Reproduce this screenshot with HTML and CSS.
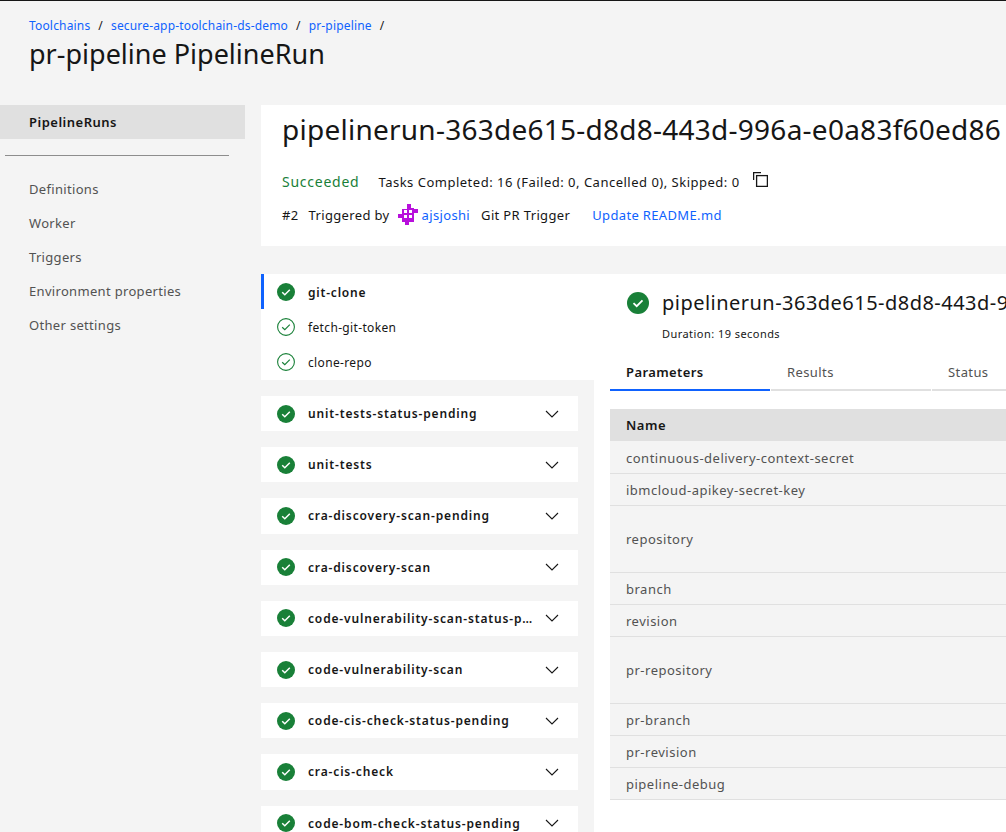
FILE: index.html
```html
<!doctype html>
<html>

<head>
	<meta charset="UTF-8">
	<title>pr-pipeline PipelineRun</title>
	<link rel="stylesheet" href="styles.css">
</head>

<body>
	<header class="page_head">
		<nav class="crumbs">
			<a href="#">Toolchains</a><span>/</span>
			<a href="#">secure-app-toolchain-ds-demo</a><span>/</span>
			<a href="#">pr-pipeline</a><span>/</span>
		</nav>
		<h1>pr-pipeline PipelineRun</h1>
	</header>
	<div class="page_body">
		<aside class="side">
			<div class="side_active">PipelineRuns</div>
			<hr>
			<ul>
				<li>Definitions</li>
				<li>Worker</li>
				<li>Triggers</li>
				<li>Environment properties</li>
				<li>Other settings</li>
			</ul>
		</aside>
		<main class="main">
			<section class="run_head">
				<h2>pipelinerun-363de615-d8d8-443d-996a-e0a83f60ed86</h2>
				<div class="run_status">
					<span class="ok_text">Succeeded</span>
					<span>Tasks Completed: 16 (Failed: 0, Cancelled 0), Skipped: 0</span>
					<svg class="copy" width="15" height="15" viewBox="0 0 15 15" fill="none" stroke="#161616" stroke-width="1.3">
						<rect x="3.6" y="3.6" width="10.8" height="10.8"/>
						<path d="M.6 8V.6H8"/>
					</svg>
				</div>
				<div class="run_trigger">
					<span class="num">#2</span>
					<span>Triggered by</span>
					<svg class="avatar" width="21" height="21" viewBox="0 0 21 21" fill="#b80fdc" fill-rule="evenodd">
						<path d="M9 0h4v4h3v1h4v4h-4v9h-5v3H7v-3H4v-4H0v-4h4V5h5zM6 6v3h3V6zm5 0v3h3V6zM6 11v3h3v-3zm5 0v3h3v-3z"/>
					</svg>
					<a class="user" href="#">ajsjoshi</a>
					<span class="trigger">Git PR Trigger</span>
					<a class="commit" href="#">Update README.md</a>
				</div>
			</section>
			<section class="run_body">
				<div class="tasks">
					<div class="task_open">
						<div class="step step_main">
							<svg class="icon" width="18" height="18" viewBox="0 0 18 18"><circle cx="9" cy="9" r="9" fill="#198038"/><path d="M5.2 9.2l2.6 2.5 5-5" fill="none" stroke="#fff" stroke-width="1.5"/></svg>
							git-clone
						</div>
						<div class="step">
							<svg class="icon" width="18" height="18" viewBox="0 0 18 18"><circle cx="9" cy="9" r="8.4" fill="none" stroke="#198038" stroke-width="1.1"/><path d="M5.2 9.2l2.6 2.5 5-5" fill="none" stroke="#198038" stroke-width="1.2"/></svg>
							fetch-git-token
						</div>
						<div class="step">
							<svg class="icon" width="18" height="18" viewBox="0 0 18 18"><circle cx="9" cy="9" r="8.4" fill="none" stroke="#198038" stroke-width="1.1"/><path d="M5.2 9.2l2.6 2.5 5-5" fill="none" stroke="#198038" stroke-width="1.2"/></svg>
							clone-repo
						</div>
					</div>
					<div class="task">
						<svg class="icon" width="18" height="18" viewBox="0 0 18 18"><circle cx="9" cy="9" r="9" fill="#198038"/><path d="M5.2 9.2l2.6 2.5 5-5" fill="none" stroke="#fff" stroke-width="1.5"/></svg>
						<span class="task_name">unit-tests-status-pending</span>
						<svg class="chev" width="14" height="8" viewBox="0 0 14 8"><path d="M1 1l6 6 6-6" fill="none" stroke="#161616" stroke-width="1.1"/></svg>
					</div>
					<div class="task">
						<svg class="icon" width="18" height="18" viewBox="0 0 18 18"><circle cx="9" cy="9" r="9" fill="#198038"/><path d="M5.2 9.2l2.6 2.5 5-5" fill="none" stroke="#fff" stroke-width="1.5"/></svg>
						<span class="task_name">unit-tests</span>
						<svg class="chev" width="14" height="8" viewBox="0 0 14 8"><path d="M1 1l6 6 6-6" fill="none" stroke="#161616" stroke-width="1.1"/></svg>
					</div>
					<div class="task">
						<svg class="icon" width="18" height="18" viewBox="0 0 18 18"><circle cx="9" cy="9" r="9" fill="#198038"/><path d="M5.2 9.2l2.6 2.5 5-5" fill="none" stroke="#fff" stroke-width="1.5"/></svg>
						<span class="task_name">cra-discovery-scan-pending</span>
						<svg class="chev" width="14" height="8" viewBox="0 0 14 8"><path d="M1 1l6 6 6-6" fill="none" stroke="#161616" stroke-width="1.1"/></svg>
					</div>
					<div class="task">
						<svg class="icon" width="18" height="18" viewBox="0 0 18 18"><circle cx="9" cy="9" r="9" fill="#198038"/><path d="M5.2 9.2l2.6 2.5 5-5" fill="none" stroke="#fff" stroke-width="1.5"/></svg>
						<span class="task_name">cra-discovery-scan</span>
						<svg class="chev" width="14" height="8" viewBox="0 0 14 8"><path d="M1 1l6 6 6-6" fill="none" stroke="#161616" stroke-width="1.1"/></svg>
					</div>
					<div class="task">
						<svg class="icon" width="18" height="18" viewBox="0 0 18 18"><circle cx="9" cy="9" r="9" fill="#198038"/><path d="M5.2 9.2l2.6 2.5 5-5" fill="none" stroke="#fff" stroke-width="1.5"/></svg>
						<span class="task_name">code-vulnerability-scan-status-pending</span>
						<svg class="chev" width="14" height="8" viewBox="0 0 14 8"><path d="M1 1l6 6 6-6" fill="none" stroke="#161616" stroke-width="1.1"/></svg>
					</div>
					<div class="task">
						<svg class="icon" width="18" height="18" viewBox="0 0 18 18"><circle cx="9" cy="9" r="9" fill="#198038"/><path d="M5.2 9.2l2.6 2.5 5-5" fill="none" stroke="#fff" stroke-width="1.5"/></svg>
						<span class="task_name">code-vulnerability-scan</span>
						<svg class="chev" width="14" height="8" viewBox="0 0 14 8"><path d="M1 1l6 6 6-6" fill="none" stroke="#161616" stroke-width="1.1"/></svg>
					</div>
					<div class="task">
						<svg class="icon" width="18" height="18" viewBox="0 0 18 18"><circle cx="9" cy="9" r="9" fill="#198038"/><path d="M5.2 9.2l2.6 2.5 5-5" fill="none" stroke="#fff" stroke-width="1.5"/></svg>
						<span class="task_name">code-cis-check-status-pending</span>
						<svg class="chev" width="14" height="8" viewBox="0 0 14 8"><path d="M1 1l6 6 6-6" fill="none" stroke="#161616" stroke-width="1.1"/></svg>
					</div>
					<div class="task">
						<svg class="icon" width="18" height="18" viewBox="0 0 18 18"><circle cx="9" cy="9" r="9" fill="#198038"/><path d="M5.2 9.2l2.6 2.5 5-5" fill="none" stroke="#fff" stroke-width="1.5"/></svg>
						<span class="task_name">cra-cis-check</span>
						<svg class="chev" width="14" height="8" viewBox="0 0 14 8"><path d="M1 1l6 6 6-6" fill="none" stroke="#161616" stroke-width="1.1"/></svg>
					</div>
					<div class="task">
						<svg class="icon" width="18" height="18" viewBox="0 0 18 18"><circle cx="9" cy="9" r="9" fill="#198038"/><path d="M5.2 9.2l2.6 2.5 5-5" fill="none" stroke="#fff" stroke-width="1.5"/></svg>
						<span class="task_name">code-bom-check-status-pending</span>
						<svg class="chev" width="14" height="8" viewBox="0 0 14 8"><path d="M1 1l6 6 6-6" fill="none" stroke="#161616" stroke-width="1.1"/></svg>
					</div>
				</div>
				<div class="detail">
					<div class="detail_title">
						<svg width="22" height="22" viewBox="0 0 22 22"><circle cx="11" cy="11" r="11" fill="#198038"/><path d="M6.5 11.2l3.2 3 5.8-5.8" fill="none" stroke="#fff" stroke-width="1.8"/></svg>
						<h3>pipelinerun-363de615-d8d8-443d-996a-e0a83f60ed86</h3>
					</div>
					<div class="duration">Duration: 19 seconds</div>
					<div class="tabs">
						<div class="tab tab_on">Parameters</div>
						<div class="tab">Results</div>
						<div class="tab">Status</div>
					</div>
					<table class="params">
						<tr><th>Name</th></tr>
						<tr><td>continuous-delivery-context-secret</td></tr>
						<tr><td>ibmcloud-apikey-secret-key</td></tr>
						<tr class="tall"><td>repository</td></tr>
						<tr><td>branch</td></tr>
						<tr><td>revision</td></tr>
						<tr class="tall"><td>pr-repository</td></tr>
						<tr><td>pr-branch</td></tr>
						<tr><td>pr-revision</td></tr>
						<tr><td>pipeline-debug</td></tr>
					</table>
				</div>
			</section>
		</main>
	</div>
</body>

</html>
```

FILE: styles.css
```css
html,body {
	margin: 0;
	height: 832px;
	overflow: hidden;
}

body {
	background: #f4f4f4;
	border-top: 1px solid #161616;
	box-sizing: border-box;
	color: #161616;
	font-family: "Noto Sans", "Open Sans", sans-serif;
}

a {
	color: #0f62fe;
	text-decoration: none;
}

.page_head {
	height: 104px;
	padding: 17px 0 0 29px;
	box-sizing: border-box;
}

.crumbs {
	display: flex;
	gap: 8px;
	font-size: 12px;
	line-height: 16px;
	letter-spacing: .17px;
}

.crumbs span {
	color: #161616;
}

h1 {
	margin: 3px 0 0;
	font-size: 27px;
	line-height: 34px;
	font-weight: 400;
}

.page_body {
	display: flex;
}

.side {
	flex: none;
	width: 245px;
	margin-right: 16px;
}

.side_active {
	height: 34px;
	padding-left: 29px;
	background: #e0e0e0;
	font-size: 13px;
	font-weight: 600;
	line-height: 34px;
	letter-spacing: .5px;
}

.side hr {
	width: 224px;
	margin: 16px 0 16px 5px;
	border: 0;
	border-top: 1px solid #8d8d8d;
}

.side ul {
	margin: 0;
	padding: 0;
	list-style: none;
}

.side li {
	height: 34px;
	padding-left: 29px;
	color: #525252;
	font-size: 13px;
	line-height: 34px;
	letter-spacing: .32px;
}

.main {
	flex: none;
	width: 745px;
}

.run_head {
	height: 141px;
	padding-left: 21px;
	box-sizing: border-box;
	background: #fff;
}

h2 {
	margin: 0;
	padding-top: 5px;
	font-size: 28px;
	line-height: 38px;
	font-weight: 400;
	letter-spacing: .25px;
	white-space: nowrap;
}

.run_status {
	display: flex;
	align-items: center;
	margin-top: 25px;
	font-size: 13px;
	line-height: 18px;
	letter-spacing: .5px;
}

.ok_text {
	margin-right: 19px;
	color: #198038;
	font-size: 14px;
	letter-spacing: .75px;
}

.copy {
	flex: none;
	margin: -5px 0 0 13px;
}

.run_trigger {
	display: flex;
	align-items: center;
	margin-top: 13px;
	font-size: 13px;
	line-height: 20px;
	letter-spacing: .35px;
}

.num {
	margin-right: 10px;
}

.avatar {
	flex: none;
	margin-left: 8px;
}

.user {
	margin-left: 3px;
}

.trigger {
	margin-left: 11px;
}

.commit {
	margin-left: 22px;
}

.run_body {
	display: flex;
	margin-top: 28px;
}

.tasks {
	flex: none;
	width: 333px;
}

.task_open {
	height: 106px;
	margin-bottom: 16px;
	background: #fff;
}

.step {
	display: flex;
	align-items: center;
	height: 35px;
	padding: 1px 0 0 13px;
	border-left: 3px solid transparent;
	box-sizing: border-box;
	font-size: 12px;
	letter-spacing: .35px;
}

.step_main {
	border-left-color: #0f62fe;
	font-weight: 600;
	letter-spacing: .8px;
}

.icon {
	flex: none;
	margin-right: 13px;
}

.task {
	display: flex;
	align-items: center;
	width: 317px;
	height: 35.2px;
	margin-bottom: 16px;
	padding-left: 16px;
	padding-right: 19px;
	box-sizing: border-box;
	background: #fff;
	font-size: 12px;
	font-weight: 600;
	letter-spacing: .85px;
}

.task_name {
	flex: 1;
	overflow: hidden;
	text-overflow: ellipsis;
	white-space: nowrap;
}

.chev {
	flex: none;
	margin-left: 8px;
}

.detail {
	flex: none;
	width: 412px;
	height: 560px;
	padding: 16px 0 0 16px;
	box-sizing: border-box;
	background: #fff;
}

.detail_title {
	display: flex;
	align-items: center;
	gap: 13px;
	margin-left: 17px;
}

.detail_title svg {
	flex: none;
}

h3 {
	margin: 0;
	font-size: 20px;
	line-height: 26px;
	font-weight: 400;
	letter-spacing: .47px;
	white-space: nowrap;
}

.duration {
	margin: 10px 0 0 52px;
	font-size: 11px;
	line-height: 16px;
	letter-spacing: .45px;
}

.tabs {
	display: flex;
	gap: 1px;
	margin-top: 10px;
}

.tab {
	flex: none;
	width: 160px;
	height: 39px;
	padding: 2px 0 0 16px;
	box-sizing: border-box;
	border-bottom: 2px solid #e0e0e0;
	color: #525252;
	font-size: 13px;
	line-height: 36px;
	letter-spacing: .4px;
}

.tab_on {
	border-bottom-color: #0f62fe;
	color: #161616;
	font-weight: 600;
}

.params {
	width: 396px;
	margin-top: 18px;
	border-spacing: 0;
	font-size: 13px;
	letter-spacing: .5px;
}

.params th {
	height: 32px;
	padding: 0 0 0 16px;
	background: #e0e0e0;
	font-weight: 600;
	text-align: left;
}

.params td {
	height: 31px;
	padding: 0 0 0 16px;
	background: #f4f4f4;
	border-bottom: 1px solid #e0e0e0;
	color: #525252;
}

.params tr:nth-child(2) td {
	height: 31px;
	padding-top: 1px;
}

.params .tall td {
	height: 66px;
}
```
